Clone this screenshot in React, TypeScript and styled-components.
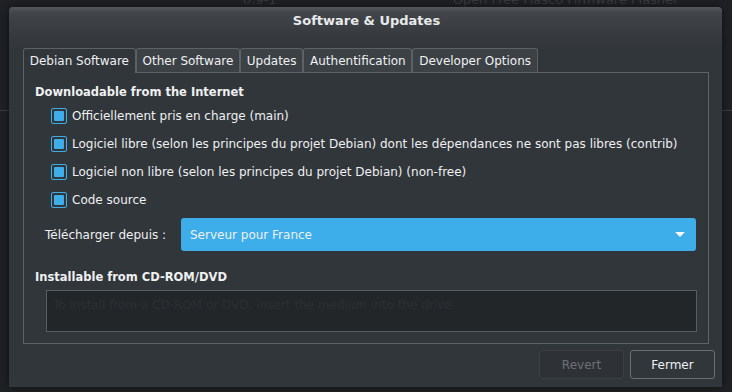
import React from 'react';
import styled, { createGlobalStyle } from 'styled-components';

const GlobalStyle = createGlobalStyle`
  html, body {
    margin: 0;
    padding: 0;
    background: #1f2124;
  }
  body {
    font-family: "DejaVu Sans", "Liberation Sans", sans-serif;
    font-size: 12px;
    color: #eff0f1;
  }
`;

const Desktop = styled.div`
  position: relative;
  width: 732px;
  height: 392px;
  overflow: hidden;
  background: #1f2124;
`;

const BackRow = styled.div`
  display: flex;
  margin-top: -8px;
  height: 16px;
  line-height: 16px;
  font-size: 13px;
  color: #383b3f;
`;

const GhostText = styled.span<{ $left: number }>`
  margin-left: ${p => p.$left}px;
  white-space: nowrap;
`;

const BackLine = styled.div<{ $top: number }>`
  margin-top: ${p => p.$top}px;
  height: 1px;
  background: #3a3d41;
`;

const Dialog = styled.div`
  position: absolute;
  left: 9px;
  top: 7px;
  width: 713px;
  height: 380px;
  display: flex;
  flex-direction: column;
  border-radius: 4px 4px 0 0;
  background: linear-gradient(#54575c 0px, #41454a 6px, #363a3f 30px, #31363b 44px);
  box-shadow: 0 0 8px rgba(0, 0, 0, 0.55);
`;

const TitleBar = styled.div`
  height: 27px;
  display: flex;
  align-items: center;
  justify-content: center;
  font-size: 13px;
  font-weight: bold;
  color: #e8e9ea;
  padding-left: 2px;
`;

const Content = styled.div`
  padding: 14px 13px 0 14px;
  display: flex;
  flex-direction: column;
`;

const TabRow = styled.div`
  display: flex;
  height: 24px;
  align-items: flex-start;
`;

const Tab = styled.div<{ $active?: boolean }>`
  position: relative;
  z-index: ${p => (p.$active ? 1 : 0)};
  height: ${p => (p.$active ? 25 : 24)}px;
  box-sizing: border-box;
  padding: 0 5.75px;
  display: flex;
  align-items: center;
  padding-bottom: ${p => (p.$active ? 1 : 0)}px;
  border: 1px solid #5d6165;
  border-bottom: none;
  border-radius: 3px 3px 0 0;
  background: ${p => (p.$active ? '#31363b' : '#3c4146')};
  color: #eff0f1;
  white-space: nowrap;
`;

const Panel = styled.div`
  height: 272px;
  box-sizing: border-box;
  border: 1px solid #5f6265;
  padding: 11px 12px 0 11px;
  display: flex;
  flex-direction: column;
`;

const SectionTitle = styled.div<{ $gap?: number }>`
  margin-top: ${p => p.$gap ?? 0}px;
  height: 16px;
  line-height: 16px;
  font-size: 11.5px;
  font-weight: bold;
  color: #eff0f1;
`;

const CheckList = styled.div`
  margin-top: 2px;
  padding-left: 16px;
  display: flex;
  flex-direction: column;
`;

const CheckRow = styled.div`
  height: 28px;
  display: flex;
  align-items: center;
  gap: 5px;
  white-space: nowrap;
`;

const Box = styled.span`
  width: 16px;
  height: 16px;
  box-sizing: border-box;
  border: 1px solid #3daee9;
  border-radius: 2px;
  padding: 2px;
  display: flex;
  &::after {
    content: '';
    flex: 1;
    background: #3daee9;
    border-radius: 1px;
  }
`;

const SourceRow = styled.div`
  margin-top: 4px;
  padding-left: 10px;
  display: flex;
  align-items: center;
`;

const SourceLabel = styled.span`
  width: 136px;
  white-space: nowrap;
`;

const Combo = styled.div`
  flex: 1;
  height: 33px;
  box-sizing: border-box;
  padding: 0 11px 0 9px;
  border-radius: 3px;
  background: #3daee9;
  color: #eff0f1;
  display: flex;
  align-items: center;
  justify-content: space-between;
`;

const Arrow = styled.span`
  width: 0;
  height: 0;
  border-left: 5px solid transparent;
  border-right: 5px solid transparent;
  border-top: 5px solid #f4f6f7;
`;

const MediaBox = styled.div`
  margin: 5px -1px 0 11px;
  height: 42px;
  box-sizing: border-box;
  border: 1px solid #5a5d61;
  background: #232629;
  padding: 7px 6px 0;
  color: #2b2f33;
  white-space: nowrap;
  overflow: hidden;
`;

const Footer = styled.div`
  display: flex;
  justify-content: flex-end;
  gap: 6px;
  padding: 6px 7px 8px 0;
`;

const Button = styled.button<{ $disabled?: boolean }>`
  width: 85px;
  height: 29px;
  box-sizing: border-box;
  border-radius: 3px;
  font-family: "DejaVu Sans", "Liberation Sans", sans-serif;
  font-size: 12px;
  border: 1px solid ${p => (p.$disabled ? '#3c4045' : '#6b6f73')};
  background: ${p => (p.$disabled ? '#2e3237' : '#31363b')};
  color: ${p => (p.$disabled ? '#6c7074' : '#eff0f1')};
  padding: 0;
`;

const tabs = ['Debian Software', 'Other Software', 'Updates', 'Authentification', 'Developer Options'];

const sources = [
  'Officiellement pris en charge (main)',
  'Logiciel libre (selon les principes du projet Debian) dont les dépendances ne sont pas libres (contrib)',
  'Logiciel non libre (selon les principes du projet Debian) (non-free)',
  'Code source',
];

export default function App() {
  return (
    <>
      <GlobalStyle />
      <Desktop>
        <BackRow>
          <GhostText $left={243}>0.9-1</GhostText>
          <GhostText $left={176}>Open Free Fiasco Firmware Flasher</GhostText>
        </BackRow>
        <BackLine $top={102} />
        <Dialog>
          <TitleBar>Software &amp; Updates</TitleBar>
          <Content>
            <TabRow>
              {tabs.map((t, i) => (
                <Tab key={t} $active={i === 0}>{t}</Tab>
              ))}
            </TabRow>
            <Panel>
              <SectionTitle>Downloadable from the Internet</SectionTitle>
              <CheckList>
                {sources.map(s => (
                  <CheckRow key={s}>
                    <Box />
                    <span>{s}</span>
                  </CheckRow>
                ))}
              </CheckList>
              <SourceRow>
                <SourceLabel>Télécharger depuis :</SourceLabel>
                <Combo>
                  <span>Serveur pour France</span>
                  <Arrow />
                </Combo>
              </SourceRow>
              <SectionTitle $gap={18}>Installable from CD-ROM/DVD</SectionTitle>
              <MediaBox>To install from a CD-ROM or DVD, insert the medium into the drive.</MediaBox>
            </Panel>
          </Content>
          <Footer>
            <Button $disabled>Revert</Button>
            <Button>Fermer</Button>
          </Footer>
        </Dialog>
      </Desktop>
    </>
  );
}
